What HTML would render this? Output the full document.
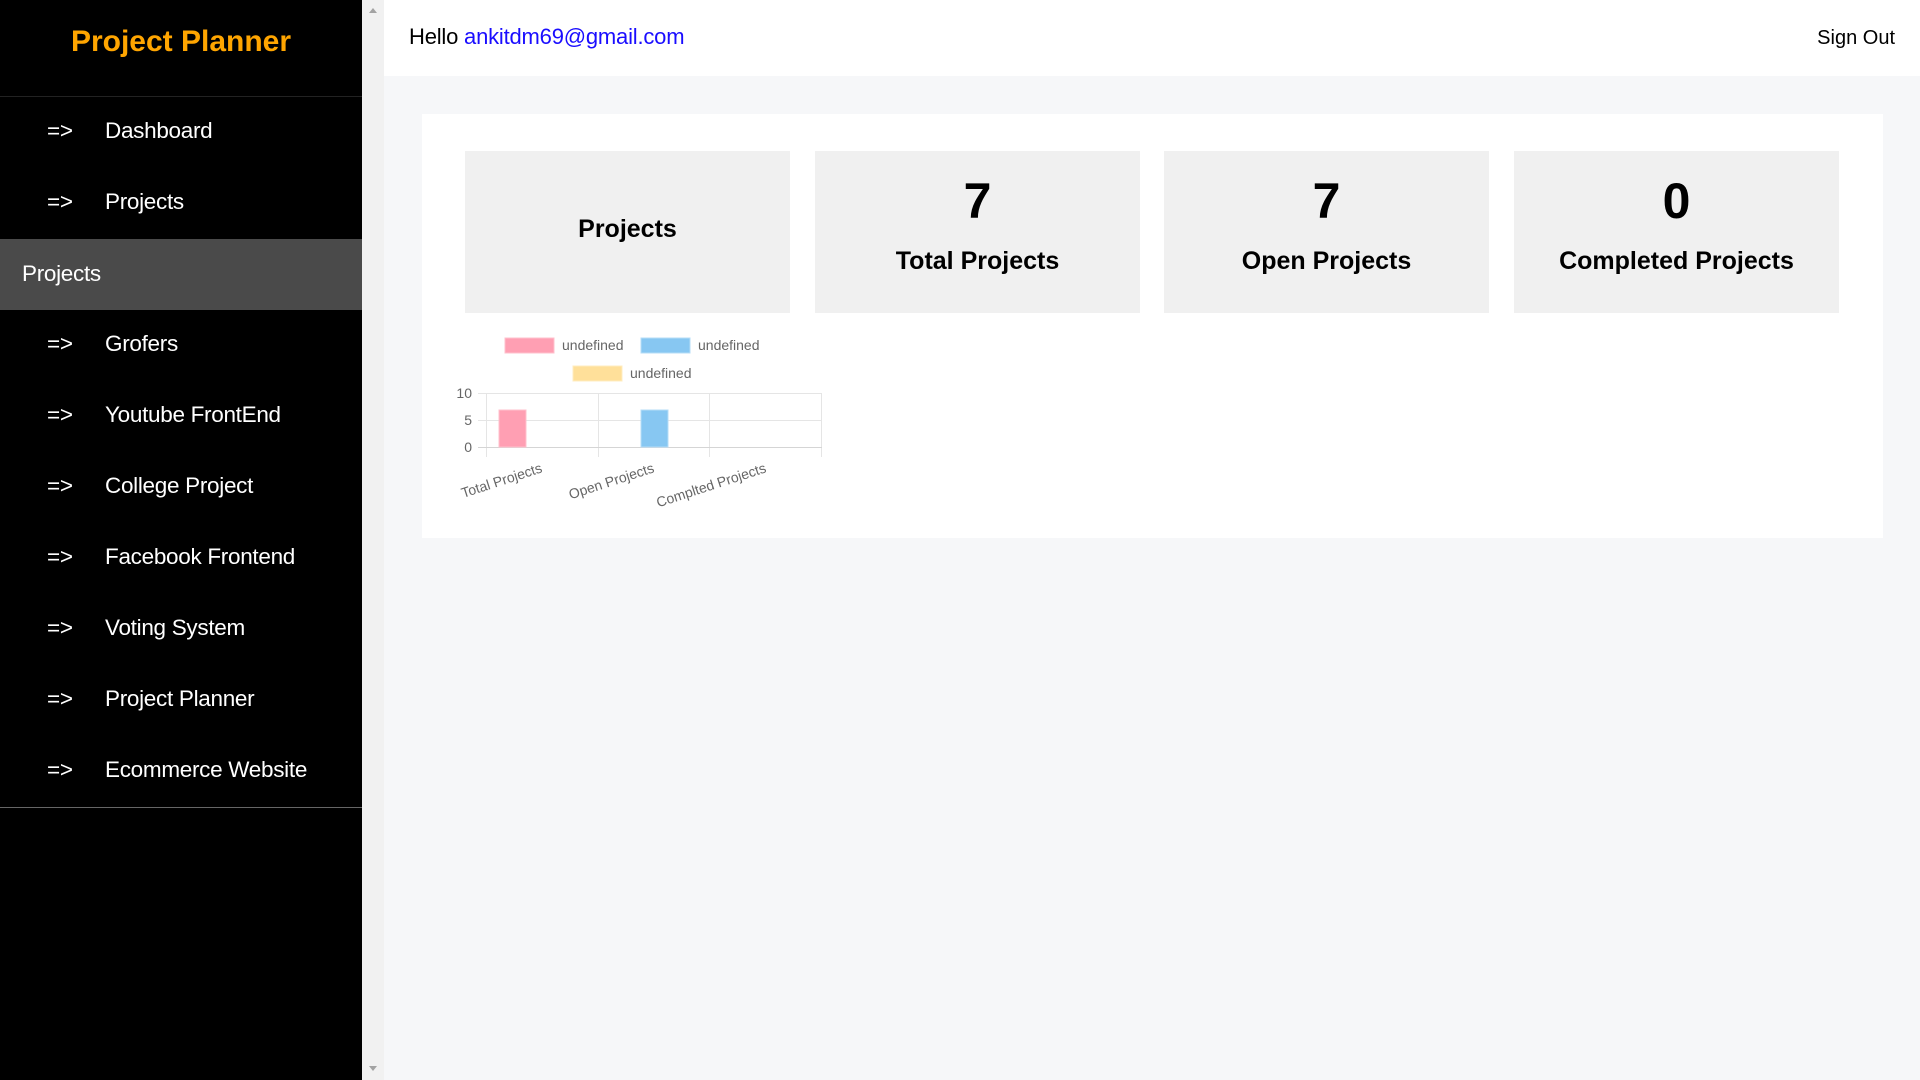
<!DOCTYPE html>
<html><head><meta charset="utf-8"><style>
*{margin:0;padding:0;box-sizing:border-box}
body{width:1920px;height:1080px;overflow:hidden;font-family:"Liberation Sans",Arial,sans-serif;background:#f6f7f9;position:relative}
.side{position:absolute;left:0;top:0;width:362px;height:1080px;background:#000}
.title{position:absolute;left:0;width:362px;top:25px;text-align:center;color:#ffa500;font-weight:bold;font-size:30px}
.line{position:absolute;left:0;width:362px;height:1px;background:#222}
.item{position:absolute;left:0;width:362px;height:71px;color:#fff;font-size:22.5px;line-height:71px;letter-spacing:-0.3px}
.item .a{position:absolute;left:47px}
.item .t{position:absolute;left:105px}
.hdr{position:absolute;left:0;top:239px;width:362px;height:71px;background:#4a4a4a;color:#fff;font-size:22.5px;line-height:69px;padding-left:22px;letter-spacing:-0.3px}
.sb{position:absolute;left:362px;top:0;width:22px;height:1080px;background:#f1f1f1}
.top{position:absolute;left:384px;top:0;width:1536px;height:76px;background:#fff;font-size:22px}
.card{position:absolute;left:422px;top:114px;width:1461px;height:424px;background:#fff}
.box{position:absolute;top:151px;width:325px;height:162px;background:#f0f0f0;text-align:center;font-weight:bold}
.num{position:absolute;top:21px;left:0;right:0;font-size:50px}
.lab{position:absolute;top:96px;left:0;right:0;font-size:25px}
</style></head><body>
<div class="side">
<div class="title">Project Planner</div>
<div class="line" style="top:96px"></div>
<div class="item" style="top:95px"><span class="a">=&gt;</span><span class="t">Dashboard</span></div>
<div class="item" style="top:166px"><span class="a">=&gt;</span><span class="t">Projects</span></div>
<div class="hdr">Projects</div>
<div class="item" style="top:308px"><span class="a">=&gt;</span><span class="t">Grofers</span></div>
<div class="item" style="top:379px"><span class="a">=&gt;</span><span class="t">Youtube FrontEnd</span></div>
<div class="item" style="top:450px"><span class="a">=&gt;</span><span class="t">College Project</span></div>
<div class="item" style="top:521px"><span class="a">=&gt;</span><span class="t">Facebook Frontend</span></div>
<div class="item" style="top:592px"><span class="a">=&gt;</span><span class="t">Voting System</span></div>
<div class="item" style="top:663px"><span class="a">=&gt;</span><span class="t">Project Planner</span></div>
<div class="item" style="top:734px"><span class="a">=&gt;</span><span class="t">Ecommerce Website</span></div>
<div class="line" style="top:807px;background:#666"></div>
</div>
<div class="sb"><div style="position:absolute;left:7px;top:8px;border:4px solid transparent;border-bottom:5px solid #a3a3a3;border-top:0"></div><div style="position:absolute;left:7px;top:1066px;border:4px solid transparent;border-top:5px solid #a3a3a3;border-bottom:0"></div></div>
<div class="top"><span style="position:absolute;left:25px;top:24px;letter-spacing:-0.2px">Hello <span style="color:#1a0dff">ankitdm69@gmail.com</span></span><span style="position:absolute;right:25px;top:27px;font-size:20px">Sign Out</span></div>
<div class="card"></div>
<div class="box" style="left:465px"><div class="lab" style="top:64px">Projects</div></div>
<div class="box" style="left:815px"><div class="num">7</div><div class="lab">Total Projects</div></div>
<div class="box" style="left:1164px"><div class="num">7</div><div class="lab">Open Projects</div></div>
<div class="box" style="left:1514px"><div class="num">0</div><div class="lab">Completed Projects</div></div>
<svg style="position:absolute;left:0;top:0" width="1920" height="1080" font-family="Liberation Sans, Arial, sans-serif" font-size="14" fill="#666">
<rect x="505" y="338" width="49" height="15" fill="#ff9fb3" stroke="#ffc0cc"/>
<text x="562" y="350">undefined</text>
<rect x="641" y="338" width="49" height="15" fill="#87c7f2" stroke="#b5dcf7"/>
<text x="698" y="350">undefined</text>
<rect x="573" y="366" width="49" height="15" fill="#ffe09a" stroke="#ffecc0"/>
<text x="630" y="378">undefined</text>
<g stroke="#e5e5e5" stroke-width="1">
<line x1="478" y1="393.5" x2="822" y2="393.5"/><line x1="478" y1="420.5" x2="822" y2="420.5"/>
<line x1="486.5" y1="393" x2="486.5" y2="457"/><line x1="598.5" y1="393" x2="598.5" y2="457"/><line x1="709.5" y1="393" x2="709.5" y2="457"/><line x1="821.5" y1="393" x2="821.5" y2="457"/>
</g>
<line x1="478" y1="447.5" x2="822" y2="447.5" stroke="#d5d5d5"/>
<rect x="499" y="410" width="27" height="37" fill="#ff9fb3" stroke="#ffc0cc"/>
<rect x="641" y="410" width="27" height="37" fill="#87c7f2" stroke="#b5dcf7"/>
<g text-anchor="end"><text x="472" y="398">10</text><text x="472" y="425">5</text><text x="472" y="452">0</text></g>
<g text-anchor="end">
<text transform="translate(543,472) rotate(-18)">Total Projects</text>
<text transform="translate(655,472) rotate(-18)">Open Projects</text>
<text transform="translate(767,472) rotate(-18)">Complted Projects</text>
</g>
</svg>
</body></html>
